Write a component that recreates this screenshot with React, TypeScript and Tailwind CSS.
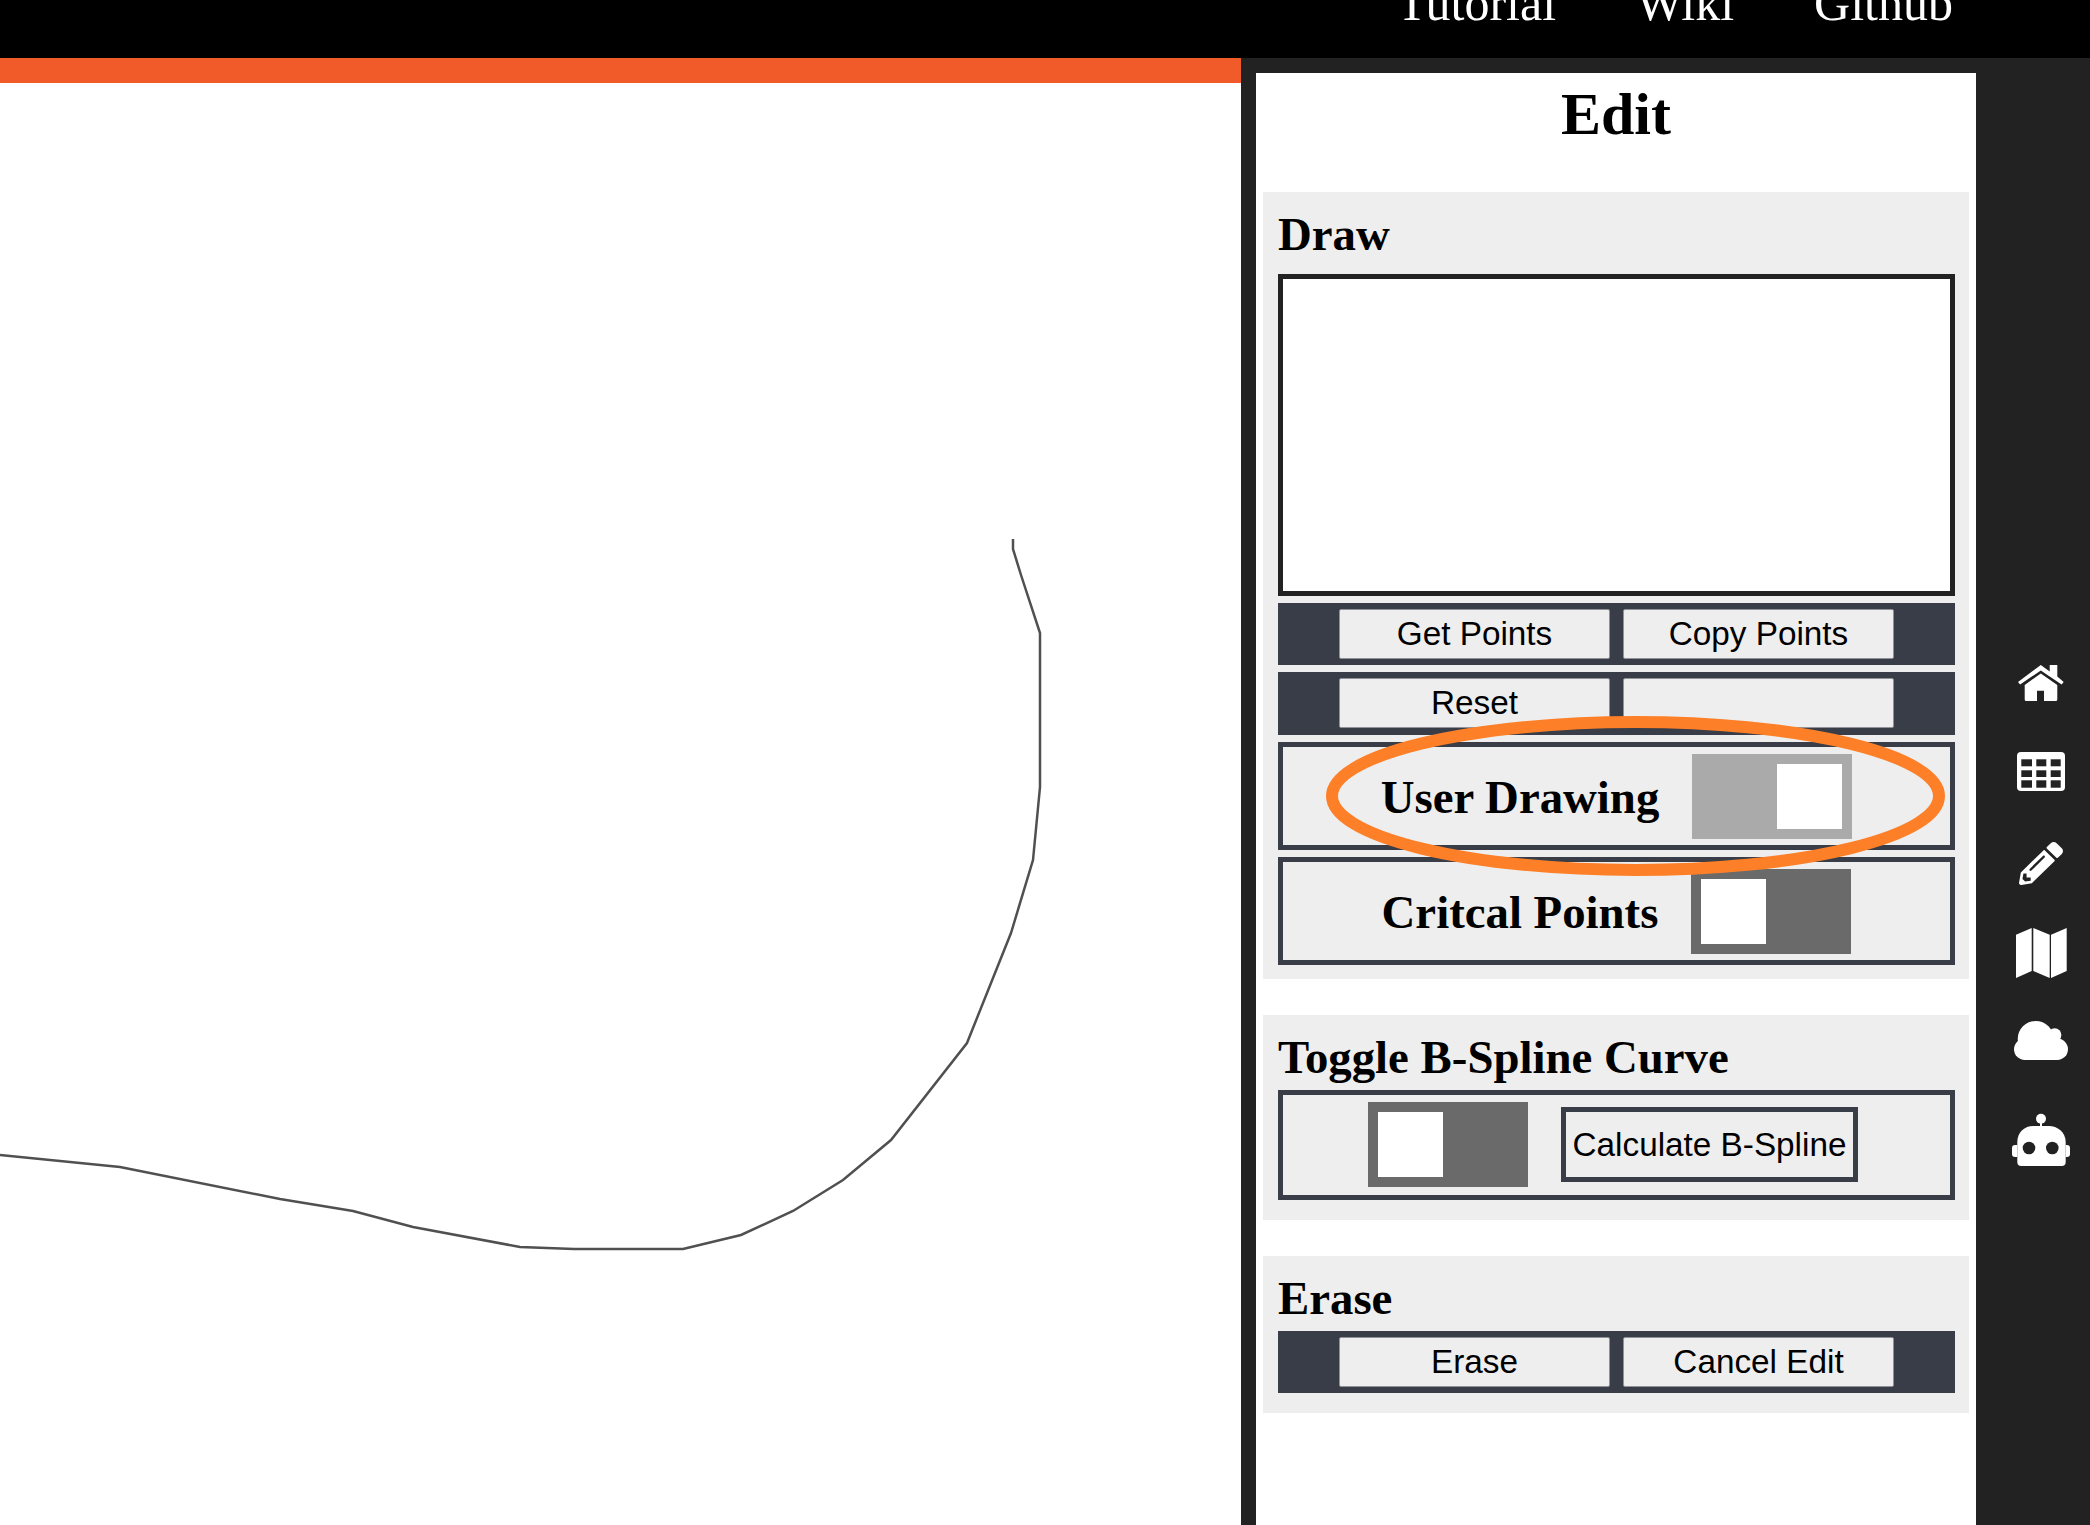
import React from "react";
import { FaPencilAlt } from "react-icons/fa";

const curve =
  "1013,539 1013,549 1021,575 1040,633 1040,787 1033,860 1011,933 967,1043 891,1140 843,1180 793,1211 741,1235 683,1249 574,1249 520,1247 413,1227 353,1211 280,1199 120,1167 0,1155";

const serif = "font-['Liberation_Serif','Times_New_Roman',serif]";
const sans = "font-['Liberation_Sans',Arial,sans-serif]";

function Btn({ label }: { label?: string }) {
  return (
    <button
      className={`w-[271px] h-[50px] bg-[#eeeeee] border border-[#8f9298] rounded-[2px] text-[33.3px] leading-none text-black ${sans}`}
    >
      {label}
    </button>
  );
}

function BtnRow({ a, b, className = "" }: { a: string; b?: string; className?: string }) {
  return (
    <div className={`bg-[#393d47] flex items-center justify-center gap-[13px] ${className}`}>
      <Btn label={a} />
      <Btn label={b} />
    </div>
  );
}

function Toggle({ on }: { on?: boolean }) {
  return (
    <div
      className={`w-[160px] h-[85px] flex shrink-0 items-center px-[10px] ${
        on ? "bg-[#aaaaaa] justify-end" : "bg-[#6a6a6a] justify-start"
      }`}
    >
      <div className="w-[65px] h-[65px] bg-white" />
    </div>
  );
}

function ToggleBox({ label, on, className = "" }: { label: string; on?: boolean; className?: string }) {
  return (
    <div className={`h-[108px] border-[5px] border-[#393d47] flex items-center justify-center gap-[33px] ${className}`}>
      <span className={`${serif} font-bold text-[46.8px] leading-none text-black pt-[3px]`}>{label}</span>
      <Toggle on={on} />
    </div>
  );
}

function Title({ children, pb }: { children: string; pb: string }) {
  return (
    <h3 className={`${serif} font-bold text-[46.8px] leading-[52px] text-black pt-[16px] ${pb}`}>{children}</h3>
  );
}

function HomeIcon() {
  return (
    <svg viewBox="0 0 46 36" className="w-[46px] h-[36px]" fill="#fff">
      <path d="M31.7 0 H39.3 V11.5 L45.7 17 L43.6 19.5 L22.8 5.5 L2.1 19.5 L0 17 L22.8 0 L31.7 6.6 Z" />
      <path d="M22.8 8.5 L39.3 20 V34.5 Q39.3 36 37.8 36 H26 V25.7 H19 V36 H8.2 Q6.7 36 6.7 34.5 V20 Z" />
    </svg>
  );
}

function TableIcon() {
  return (
    <svg viewBox="0 0 48 39" className="w-[48px] h-[39px]" fill="#fff">
      <rect width="48" height="39" rx="4" />
      <g fill="#222222">
        <rect x="4.3" y="7.3" width="10.7" height="7" />
        <rect x="19.3" y="7.3" width="10" height="7" />
        <rect x="33.7" y="7.3" width="10" height="7" />
        <rect x="4.3" y="18.3" width="10.7" height="6.7" />
        <rect x="19.3" y="18.3" width="10" height="6.7" />
        <rect x="33.7" y="18.3" width="10" height="6.7" />
        <rect x="4.3" y="28.3" width="10.7" height="7.4" />
        <rect x="19.3" y="28.3" width="10" height="7.4" />
        <rect x="33.7" y="28.3" width="10" height="7.4" />
      </g>
    </svg>
  );
}

function CloudIcon() {
  return (
    <svg viewBox="0 0 54 39" className="w-[54px] h-[39px]" fill="#fff">
      <circle cx="21.7" cy="18" r="18" />
      <circle cx="40.7" cy="14" r="6.7" />
      <circle cx="10.7" cy="28.3" r="10.7" />
      <circle cx="43.3" cy="28.3" r="10.7" />
      <rect x="10.7" y="18" width="32.6" height="21" />
    </svg>
  );
}

function RobotIcon() {
  return (
    <svg viewBox="0 0 58 53" className="w-[58px] h-[53px]" fill="#fff">
      <circle cx="29" cy="5.7" r="5" />
      <rect x="28" y="10" width="2" height="4" />
      <path d="M5.3 49 L5.3 29 C5.3 19 13 13 21 13 L37 13 C45 13 53.7 19 53.7 29 L53.7 49 Q53.7 53 49.7 53 L9.3 53 Q5.3 53 5.3 49 Z" />
      <path d="M5.3 32 H3 Q0 32 0 35 V41 Q0 44 3 44 H5.3 Z M53.7 32 H55 Q58 32 58 35 V41 Q58 44 55 44 H53.7 Z" />
      <circle cx="17" cy="35" r="6.3" fill="#222222" />
      <circle cx="40.3" cy="35" r="6.3" fill="#222222" />
    </svg>
  );
}

function MapIcon() {
  return (
    <svg viewBox="0 0 51 52" className="w-[51px] h-[52px]" fill="#fff">
      <polygon points="0,7.7 15.7,1 15.7,44 0,51" />
      <polygon points="17.3,1 33.7,7.7 33.7,51 17.3,44" />
      <polygon points="35,7.7 50.7,1 50.7,44 35,51" />
    </svg>
  );
}

export default function App() {
  return (
    <div className="w-[2090px] h-[1525px] overflow-hidden bg-white flex flex-col">
      <header className="h-[58px] shrink-0 bg-black overflow-hidden flex justify-end gap-[80px] pr-[137px]">
        {["Tutorial", "Wiki", "Github"].map((t) => (
          <a key={t} className={`${serif} text-[50px] leading-[50px] -mt-[22px] text-white`}>
            {t}
          </a>
        ))}
      </header>
      <div className="flex-1 flex min-h-0">
        <main className="w-[1241px] flex flex-col">
          <div className="h-[25px] bg-[#f15a29]" />
          <div className="flex-1 bg-white">
            <svg viewBox="0 83 1241 1442" className="w-full h-full">
              <polyline points={curve} fill="none" stroke="#505050" strokeWidth="2.5" />
            </svg>
          </div>
        </main>
        <aside className="flex-1 bg-[#222222] flex pl-[15px] pt-[15px]">
          <div className="w-[720px] bg-white">
            <h1 className={`${serif} font-bold text-[60px] leading-[66px] text-center text-black h-[119px] pt-[8px]`}>
              Edit
            </h1>
            <section className="relative ml-[7px] w-[706px] h-[787px] bg-[#eeeeee] pl-[15px] pr-[14px]">
              <Title pb="pb-[14px]">Draw</Title>
              <div className="h-[322px] border-[5px] border-[#222222] bg-white" />
              <BtnRow a="Get Points" b="Copy Points" className="mt-[7px] h-[62px]" />
              <BtnRow a="Reset" className="mt-[7px] h-[63px] pb-[1px]" />
              <ToggleBox label="User Drawing" on className="mt-[7px]" />
              <ToggleBox label="Critcal Points" className="mt-[7px]" />
              <svg
                viewBox="0 0 619 160"
                className="absolute left-[63px] top-[524px] w-[619px] h-[160px] pointer-events-none"
              >
                <ellipse cx="309.5" cy="80" rx="303.5" ry="74" fill="none" stroke="#fd7f28" strokeWidth="12" />
              </svg>
            </section>
            <section className="ml-[7px] mt-[36px] w-[706px] h-[205px] bg-[#eeeeee] pl-[15px] pr-[14px]">
              <Title pb="pb-[7px]">Toggle B-Spline Curve</Title>
              <div className="h-[110px] border-[5px] border-[#393d47] flex items-center pl-[85px] pb-[1px] gap-[33px]">
                <Toggle />
                <button
                  className={`w-[297px] h-[75px] border-[5px] border-[#393d47] bg-[#eeeeee] text-[33.3px] leading-none text-black ${sans}`}
                >
                  Calculate B-Spline
                </button>
              </div>
            </section>
            <section className="ml-[7px] mt-[36px] w-[706px] h-[157px] bg-[#eeeeee] pl-[15px] pr-[14px]">
              <Title pb="pb-[7px]">Erase</Title>
              <BtnRow a="Erase" b="Cancel Edit" className="h-[62px]" />
            </section>
          </div>
          <nav className="flex-1 flex flex-col items-center pl-[16px] pt-[592px] text-white">
            <div className="h-[87px]">
              <HomeIcon />
            </div>
            <div className="h-[90px]">
              <TableIcon />
            </div>
            <div className="h-[85px]">
              <FaPencilAlt className="w-[44px] h-[43px]" preserveAspectRatio="none" />
            </div>
            <div className="h-[94px]">
              <MapIcon />
            </div>
            <div className="h-[92px]">
              <CloudIcon />
            </div>
            <RobotIcon />
          </nav>
        </aside>
      </div>
    </div>
  );
}
